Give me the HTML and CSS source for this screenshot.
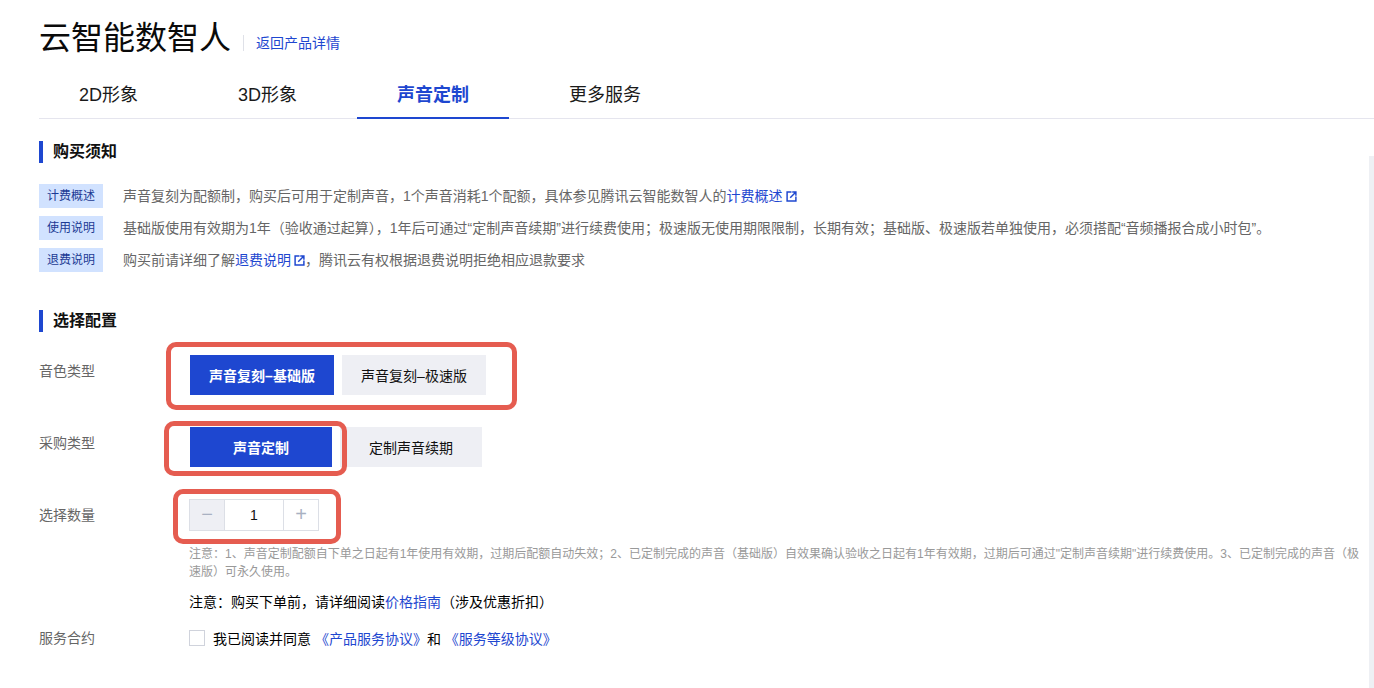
FILE: index.html
```html
<!DOCTYPE html>
<html lang="zh-CN">
<head>
<meta charset="utf-8">
<title>云智能数智人</title>
<link rel="stylesheet" href="styles.css">
</head>
<body>
<div class="page">
  <header class="head">
    <h1 class="title">云智能数智人</h1>
    <span class="head-sep"></span>
    <a class="link head-link">返回产品详情</a>
  </header>
  <nav class="tabs">
    <a class="tab">2D形象</a>
    <a class="tab">3D形象</a>
    <a class="tab tab-on">声音定制</a>
    <a class="tab">更多服务</a>
  </nav>

  <section class="notice">
    <h2 class="sec-title">购买须知</h2>
    <div class="note-list">
      <div class="note">
        <span class="tag">计费概述</span>
        <p class="note-text">声音复刻为配额制，购买后可用于定制声音，1个声音消耗1个配额，具体参见腾讯云智能数智人的<a class="link">计费概述<svg class="ext" viewBox="0 0 12 12"><path d="M6 1.2H1.2v9.6h9.6V6" fill="none" stroke="currentColor" stroke-width="1.6"/><path d="M4.6 7.4 10 2M6.8 1.2h4v4" fill="none" stroke="currentColor" stroke-width="1.6"/></svg></a></p>
      </div>
      <div class="note">
        <span class="tag">使用说明</span>
        <p class="note-text">基础版使用有效期为1年（验收通过起算），1年后可通过“定制声音续期”进行续费使用；极速版无使用期限限制，长期有效；基础版、极速版若单独使用，必须搭配“音频播报合成小时包”。</p>
      </div>
      <div class="note">
        <span class="tag">退费说明</span>
        <p class="note-text">购买前请详细了解<a class="link">退费说明<svg class="ext" viewBox="0 0 12 12"><path d="M6 1.2H1.2v9.6h9.6V6" fill="none" stroke="currentColor" stroke-width="1.6"/><path d="M4.6 7.4 10 2M6.8 1.2h4v4" fill="none" stroke="currentColor" stroke-width="1.6"/></svg></a>，腾讯云有权根据退费说明拒绝相应退款要求</p>
      </div>
    </div>
  </section>

  <section class="config">
    <h2 class="sec-title">选择配置</h2>
    <div class="row row-type">
      <span class="label">音色类型</span>
      <div class="opts">
        <button class="opt opt-on">声音复刻–基础版</button>
        <button class="opt">声音复刻–极速版</button>
      </div>
    </div>
    <div class="row row-buy">
      <span class="label">采购类型</span>
      <div class="opts">
        <button class="opt opt-narrow opt-on">声音定制</button>
        <button class="opt opt-narrow">定制声音续期</button>
      </div>
    </div>
    <div class="row row-qty">
      <span class="label">选择数量</span>
      <div class="qty-col">
        <div class="stepper">
          <span class="step step-off">−</span>
          <span class="step-val">1</span>
          <span class="step">+</span>
        </div>
        <p class="hint">注意：1、声音定制配额自下单之日起有1年使用有效期，过期后配额自动失效；2、已定制完成的声音（基础版）自效果确认验收之日起有1年有效期，过期后可通过"定制声音续期"进行续费使用。3、已定制完成的声音（极速版）可永久使用。</p>
        <p class="warn">注意：购买下单前，请详细阅读<a class="link">价格指南</a>（涉及优惠折扣）</p>
      </div>
    </div>
    <div class="row row-agree">
      <span class="label">服务合约</span>
      <label class="agree"><span class="check"></span><span>我已阅读并同意 <a class="link">《产品服务协议》</a>和 <a class="link">《服务等级协议》</a></span></label>
    </div>
  </section>

  <div class="mark mark-a"></div>
  <div class="mark mark-b"></div>
  <div class="mark mark-c"></div>
  <div class="scroll-track"></div>
</div>
</body>
</html>
```
FILE: styles.css
```css
* { box-sizing: border-box; }
html, body { margin: 0; height: 100%; overflow: hidden; background: #fff; }
body {
  font-family: "Liberation Sans", "Noto Sans CJK SC", sans-serif;
  font-size: 14px;
  color: #000;
}
.page { position: relative; width: 1374px; height: 688px; padding: 16px 0 0 39px; overflow: hidden; }
.link { color: #1e47d0; text-decoration: none; }

.head { display: flex; align-items: center; height: 44px; }
.title { margin: 0; font-size: 32px; font-weight: 400; line-height: 44px; color: #0a0a0a; }
.head-sep { width: 1px; height: 16px; background: #dfe1e8; margin: 10px 12px 0 12px; }
.head-link { font-size: 14px; line-height: 20px; margin-top: 10px; }

.tabs { display: flex; gap: 20px; height: 59px; padding-top: 15px; border-bottom: 1px solid #e5e5ee; }
.tab { height: 44px; padding: 0 40px; font-size: 18px; line-height: 40px; color: #1a1a1a; }
.tab-on { color: #1e47d0; font-weight: 600; border-bottom: 2px solid #1e47d0; }

.sec-title { margin: 0; height: 22px; padding-left: 10px; border-left: 4px solid #1e47d0; font-size: 16px; font-weight: 600; line-height: 22px; color: #111; }
.notice { padding-top: 22px; }
.note-list { display: flex; flex-direction: column; gap: 8px; margin-top: 21px; }
.note { display: flex; align-items: center; height: 24px; }
.tag { flex: none; width: 64px; height: 24px; background: #d1e2ff; color: #1c3a94; font-size: 12px; line-height: 24px; text-align: center; }
.note-text { margin: 0 0 0 20px; font-size: 14px; line-height: 24px; color: #666; white-space: nowrap; }
.ext { width: 11px; height: 11px; margin-left: 3px; vertical-align: -1px; }

.config { padding-top: 38px; }
.row { display: flex; }
.label { flex: none; width: 150px; font-size: 14px; line-height: 24px; color: #666; }
.row-type { margin-top: 23px; }
.row-type .label { margin-top: 4px; }
.row-buy { margin-top: 32px; }
.row-buy .label { margin-top: 4px; }
.row-qty { margin-top: 32px; }
.row-qty .label { margin-top: 4px; }
.row-agree { margin-top: 14px; }
.opts { display: flex; gap: 8px; margin-left: 1px; }
.opt { width: 144px; height: 40px; border: 0; padding: 0; background: #eeeff4; color: #111; font: inherit; font-size: 14px; }
.opt-narrow { width: 142px; }
.opt-on { background: #1e47d0; color: #fff; font-weight: 600; }

.qty-col { min-width: 0; width: 1172px; }
.stepper { display: flex; width: 130px; height: 32px; border: 1px solid #dcdfe6; }
.step { flex: none; width: 35px; background: #fff; color: #a9b1c2; font-size: 20px; line-height: 28px; text-align: center; }
.step-off { background: #eeeff4; border-right: 1px solid #dcdfe6; }
.step:last-child { border-left: 1px solid #dcdfe6; }
.step-val { flex: 1; text-align: center; font-size: 14px; line-height: 30px; color: #111; }
.hint { margin: 14px 0 0; font-size: 12px; line-height: 18px; color: #999; }
.warn { margin: 11px 0 0; font-size: 14px; line-height: 20px; color: #000; white-space: nowrap; }
.agree { display: flex; align-items: center; height: 24px; font-size: 14px; color: #000; }
.check { width: 16px; height: 16px; border: 1px solid #d0d3dc; margin-right: 8px; background: #fff; }

.mark { position: absolute; border: 5px solid #e55c50; border-radius: 10px; }
.mark-a { left: 166px; top: 342px; width: 351px; height: 68px; }
.mark-b { left: 164px; top: 421px; width: 183px; height: 55px; }
.mark-c { left: 173px; top: 489px; width: 168px; height: 55px; }
.scroll-track { position: absolute; right: 0; top: 156px; bottom: 0; width: 5px; background: #eef0f4; }
```
